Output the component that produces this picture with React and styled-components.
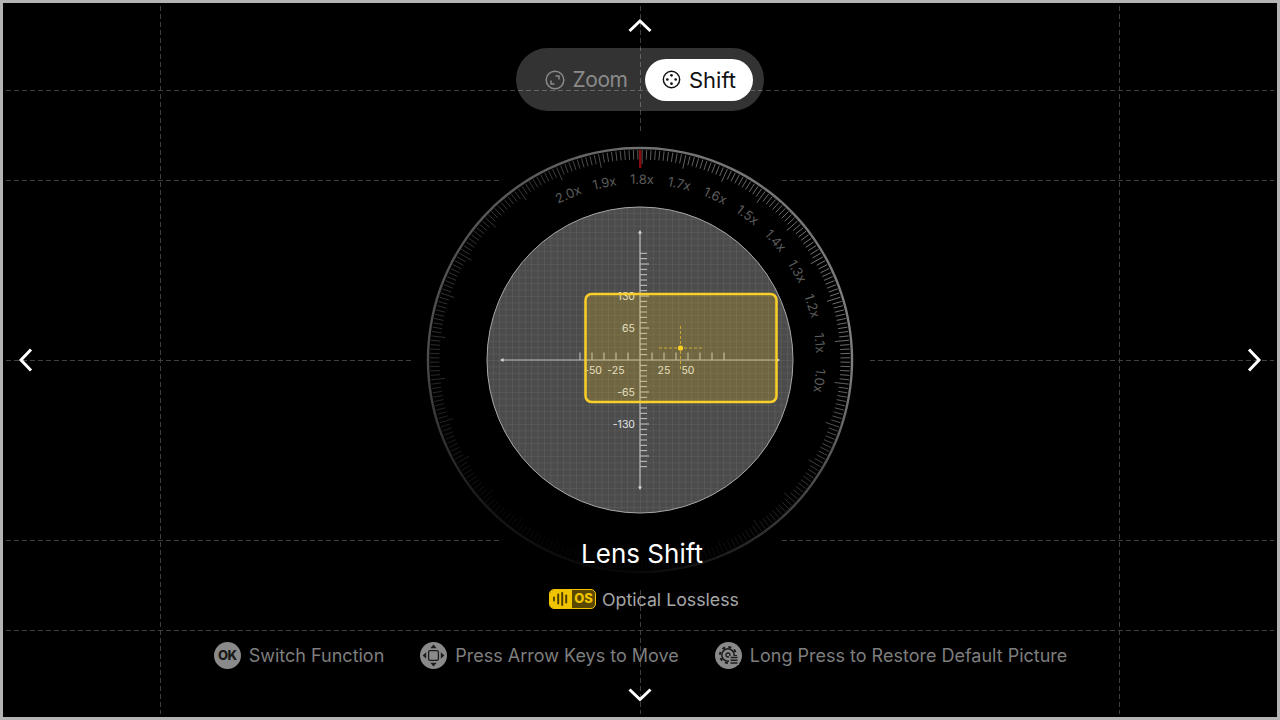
import React from "react";
import styled, { createGlobalStyle } from "styled-components";

const CX = 228;
const CY = 228;

const RING_STOPS = [[0, 0.45], [90, 0.5], [127, 0.28], [158, 0.1], [180, 0.03], [202, 0.05], [227, 0.1], [248, 0.2], [270, 0.3], [330, 0.36], [360, 0.45]];
const TICK_STOPS = [[0, 0.36], [60, 0.45], [90, 0.42], [127, 0.2], [158, 0.05], [180, 0.02], [202, 0.03], [227, 0.06], [248, 0.12], [270, 0.18], [330, 0.22], [360, 0.36]];
const ZOOM_LABELS = ["2.0x", "1.9x", "1.8x", "1.7x", "1.6x", "1.5x", "1.4x", "1.3x", "1.2x", "1.1x", "1.0x"];

function fade(stops, deg) {
  const d = ((deg % 360) + 360) % 360;
  for (let i = 1; i < stops.length; i++) {
    const [a, va] = stops[i - 1];
    const [b, vb] = stops[i];
    if (d <= b) return va + ((vb - va) * (d - a)) / (b - a);
  }
  return stops[0][1];
}

function polar(r, deg) {
  const rad = (deg * Math.PI) / 180;
  return [CX + r * Math.sin(rad), CY - r * Math.cos(rad)];
}

function Ring() {
  const parts = [];
  for (let d = 0; d < 360; d += 3) {
    const [x1, y1] = polar(212, d);
    const [x2, y2] = polar(212, d + 3);
    parts.push(
      <path key={d} d={`M${x1} ${y1}A212 212 0 0 1 ${x2} ${y2}`} fill="none" stroke="#fff" strokeOpacity={fade(RING_STOPS, d)} strokeWidth="2.4" />
    );
  }
  return parts;
}

function Ticks() {
  const ticks = [];
  for (let i = 0; i < 300; i++) {
    const d = 0.6 + i * 1.2;
    const major = i % 10 === 0;
    const [x1, y1] = polar(210, d);
    const [x2, y2] = polar(major ? 196 : 200.5, d);
    ticks.push(<line key={i} x1={x1} y1={y1} x2={x2} y2={y2} stroke="#fff" strokeOpacity={fade(TICK_STOPS, d)} strokeWidth="1" />);
  }
  return ticks;
}

function ZoomLabels() {
  return ZOOM_LABELS.map((label, i) => {
    const d = 0.6 + (i - 2) * 12;
    const [x, y] = polar(181, d);
    return (
      <text key={label} x={x} y={y} fontSize="13" fill="#5c5c5c" textAnchor="middle" dominantBaseline="central" transform={`rotate(${d} ${x} ${y})`}>
        {label}
      </text>
    );
  });
}

function Scale() {
  const h = [];
  for (let x = -60; x <= 84; x += 12) {
    if (x === 0) continue;
    h.push(<line key={x} x1={CX + x} y1={CY - 7.5} x2={CX + x} y2={CY} stroke="#c9c9c9" strokeWidth="1" />);
  }
  const v = [];
  for (let i = -20; i <= 20; i++) {
    if (i === 0) continue;
    const long = i % 6 === 0;
    const y = CY + i * 5.333;
    v.push(<line key={i} x1={CX} y1={y} x2={CX + (long ? 9 : 7)} y2={y} stroke="#c9c9c9" strokeWidth="1" />);
  }
  return (
    <g>
      {h}
      {v}
      <line x1={CX - 138} y1={CY} x2={CX + 138} y2={CY} stroke="#bdbdbd" strokeWidth="1.2" />
      <line x1={CX} y1={CY - 128} x2={CX} y2={CY + 128} stroke="#bdbdbd" strokeWidth="1.2" />
      <path d={`M${CX - 140} ${CY}l3.5 -2v4z`} fill="#d8d8d8" />
      <path d={`M${CX + 140} ${CY}l-3.5 -2v4z`} fill="#d8d8d8" />
      <path d={`M${CX} ${CY - 130}l-2 3.5h4z`} fill="#d8d8d8" />
      <path d={`M${CX} ${CY + 130}l-2 -3.5h4z`} fill="#d8d8d8" />
      <g fontSize="10.5" fill="#e4e4e4" textAnchor="middle">
        <text x={CX - 47} y={CY + 14}>-50</text>
        <text x={CX - 24} y={CY + 14}>-25</text>
        <text x={CX + 24} y={CY + 14}>25</text>
        <text x={CX + 48} y={CY + 14}>50</text>
      </g>
      <g fontSize="10.5" fill="#e4e4e4" textAnchor="end">
        <text x={CX - 5} y={CY - 60}>130</text>
        <text x={CX - 5} y={CY - 28}>65</text>
        <text x={CX - 5} y={CY + 36}>-65</text>
        <text x={CX - 5} y={CY + 68}>-130</text>
      </g>
    </g>
  );
}

function Dial() {
  return (
    <DialSvg viewBox="0 0 456 456">
      <defs>
        <pattern id="fine" width="6.4" height="6.4" patternUnits="userSpaceOnUse" x={CX} y={CY}>
          <path d="M6.4 0H0V6.4" fill="none" stroke="#626262" strokeWidth="1" />
        </pattern>
      </defs>
      <circle cx={CX} cy={CY} r="228" fill="#000" />
      <Ring />
      <Ticks />
      <rect x={CX - 1} y="18" width="2.4" height="18" fill="#8a0b0b" />
      <ZoomLabels />
      <circle cx={CX} cy={CY} r="153" fill="#4b4b4b" />
      <circle cx={CX} cy={CY} r="153" fill="url(#fine)" stroke="#a8a8a8" strokeWidth="1" />
      <Scale />
      <rect x="173.5" y="162" width="191" height="108" rx="6" fill="#ffcd18" fillOpacity="0.2" stroke="#fbcf2a" strokeWidth="2.5" />
      <g stroke="#e0b82c" strokeOpacity="0.8" strokeWidth="1" strokeDasharray="3 2">
        <line x1="247" y1="216" x2="291" y2="216" />
        <line x1="268.5" y1="194" x2="268.5" y2="238" />
      </g>
      <circle cx="268.5" cy="216" r="2.6" fill="#ffd21f" />
    </DialSvg>
  );
}

function Chevron({ dir }) {
  const paths = {
    up: "M1.5 13L12 3L22.5 13",
    down: "M1.5 2.5L12 12.5L22.5 2.5",
  };
  return (
    <ChevronSvg viewBox="0 0 24 15">
      <path d={paths[dir]} fill="none" stroke="#fff" strokeWidth="3" />
    </ChevronSvg>
  );
}

function SideChevron({ dir }) {
  return (
    <SideArrow $dir={dir} viewBox="0 0 15 24">
      <path d={dir === "left" ? "M13 1.5L3 12L13 22.5" : "M2 1.5L12 12L2 22.5"} fill="none" stroke="#fff" strokeWidth="3" />
    </SideArrow>
  );
}

function ZoomIcon() {
  return (
    <svg width="20" height="20" viewBox="0 0 20 20" fill="none" stroke="#8a8a8a" strokeWidth="1.5">
      <circle cx="10" cy="10" r="8.8" />
      <path d="M10.5 6H14V9.5M9.5 14H6V10.5" />
    </svg>
  );
}

function ShiftIcon() {
  return (
    <svg width="19" height="19" viewBox="0 0 20 20" fill="none">
      <circle cx="10" cy="10" r="8.6" stroke="#111" strokeWidth="1.5" />
      <g fill="#111">
        <circle cx="10" cy="5.6" r="1.4" />
        <circle cx="10" cy="14.4" r="1.4" />
        <circle cx="5.6" cy="10" r="1.4" />
        <circle cx="14.4" cy="10" r="1.4" />
      </g>
    </svg>
  );
}

function ArrowKeysIcon() {
  return (
    <svg width="27" height="27" viewBox="0 0 27 27">
      <circle cx="13.5" cy="13.5" r="13.5" fill="#8a8a8a" />
      <rect x="8.6" y="8.6" width="9.8" height="9.8" rx="1.6" fill="#8a8a8a" stroke="#1c1c1c" strokeWidth="1.3" />
      <g fill="#1c1c1c">
        <path d="M13.5 2.6l3.2 3.6h-6.4z" />
        <path d="M13.5 24.4l3.2 -3.6h-6.4z" />
        <path d="M2.6 13.5l3.6 -3.2v6.4z" />
        <path d="M24.4 13.5l-3.6 -3.2v6.4z" />
      </g>
    </svg>
  );
}

function RestoreIcon() {
  return (
    <svg width="27" height="27" viewBox="0 0 27 27" fill="none">
      <circle cx="13.5" cy="13.5" r="13.5" fill="#8a8a8a" />
      <circle cx="13" cy="13" r="6.2" stroke="#1c1c1c" strokeWidth="1.5" />
      <circle cx="13" cy="13" r="8" stroke="#1c1c1c" strokeWidth="2" strokeDasharray="3 3.3" />
      <circle cx="13" cy="13" r="2" stroke="#1c1c1c" strokeWidth="1.3" />
      <rect x="14" y="14" width="10" height="9" fill="#8a8a8a" />
      <path d="M15.5 15.5h7M15.5 18.3h7M15.5 21.1h7" stroke="#1c1c1c" strokeWidth="1.5" />
    </svg>
  );
}

function WaveIcon() {
  return (
    <svg width="18" height="14" viewBox="0 0 18 14" fill="none" stroke="#4f4000" strokeLinecap="round">
      <path d="M2 5.5v3" strokeWidth="1.8" />
      <path d="M6.2 2.5v9" strokeWidth="2" />
      <path d="M10.2 1v12" strokeWidth="2" />
      <path d="M14.2 3.5v7" strokeWidth="2" />
    </svg>
  );
}

export default function App() {
  return (
    <>
      <GlobalStyle />
      <Screen>
        <GridLines viewBox="0 0 1280 720">
          <g stroke="#404040" strokeWidth="1" strokeDasharray="5 3">
            <line x1="6" y1="90.5" x2="1274" y2="90.5" />
            <line x1="6" y1="180.5" x2="1274" y2="180.5" />
            <line x1="6" y1="360.5" x2="1274" y2="360.5" />
            <line x1="6" y1="540.5" x2="1274" y2="540.5" />
            <line x1="6" y1="630.5" x2="1274" y2="630.5" />
            <line x1="160.5" y1="6" x2="160.5" y2="714" />
            <line x1="640.5" y1="6" x2="640.5" y2="714" />
            <line x1="1119.5" y1="6" x2="1119.5" y2="714" />
          </g>
        </GridLines>
        <SideChevron dir="left" />
        <SideChevron dir="right" />
        <Content>
          <Chevron dir="up" />
          <Switcher>
            <Tab>
              <ZoomIcon />
              Zoom
            </Tab>
            <Tab $active>
              <ShiftIcon />
              Shift
            </Tab>
          </Switcher>
          <DialWrap>
            <Dial />
            <Title>Lens Shift</Title>
          </DialWrap>
          <ModeRow>
            <Badge>
              <BadgeWave>
                <WaveIcon />
              </BadgeWave>
              <BadgeText>OS</BadgeText>
            </Badge>
            Optical Lossless
          </ModeRow>
          <Hints>
            <Hint>
              <OkKey>OK</OkKey>
              Switch Function
            </Hint>
            <Hint>
              <ArrowKeysIcon />
              Press Arrow Keys to Move
            </Hint>
            <Hint>
              <RestoreIcon />
              Long Press to Restore Default Picture
            </Hint>
          </Hints>
          <BottomArrow>
            <Chevron dir="down" />
          </BottomArrow>
        </Content>
      </Screen>
    </>
  );
}

const GlobalStyle = createGlobalStyle`
  html, body {
    margin: 0;
    padding: 0;
    background: #000;
  }

  body {
    font-family: Inter, "Noto Sans", sans-serif;
  }
`;

const Screen = styled.div`
  position: relative;
  width: 1280px;
  height: 720px;
  box-sizing: border-box;
  border: 3px solid #b4b4b4;
  background: #000;
  overflow: hidden;
`;

const GridLines = styled.svg`
  position: absolute;
  left: -3px;
  top: -3px;
  width: 1280px;
  height: 720px;
`;

const Content = styled.div`
  position: relative;
  z-index: 1;
  display: flex;
  flex-direction: column;
  align-items: center;
  padding-top: 14.5px;
`;

const ChevronSvg = styled.svg`
  display: block;
  width: 24px;
  height: 15px;
`;

const SideArrow = styled.svg`
  position: absolute;
  z-index: 2;
  top: 345px;
  ${(p) => (p.$dir === "left" ? "left: 15px;" : "right: 15px;")}
  width: 15px;
  height: 24px;
`;

const Switcher = styled.div`
  display: flex;
  align-items: center;
  box-sizing: border-box;
  width: 248px;
  height: 63px;
  margin-top: 15.5px;
  padding: 0 11px;
  border-radius: 32px;
  background: rgba(255, 255, 255, 0.2);
`;

const Tab = styled.div`
  display: flex;
  align-items: center;
  justify-content: center;
  gap: 8px;
  height: 42px;
  border-radius: 21px;
  width: ${(p) => (p.$active ? "108px" : "118px")};
  font-size: ${(p) => (p.$active ? "22px" : "21px")};
  letter-spacing: ${(p) => (p.$active ? "0" : "-0.5px")};
  color: ${(p) => (p.$active ? "#111" : "#8a8a8a")};
  background: ${(p) => (p.$active ? "#fff" : "transparent")};
`;

const DialWrap = styled.div`
  position: relative;
  width: 456px;
  height: 456px;
  margin-top: 21px;
`;

const DialSvg = styled.svg`
  display: block;
  width: 456px;
  height: 456px;

  text {
    font-family: Inter, "Noto Sans", sans-serif;
  }
`;

const Title = styled.div`
  position: absolute;
  left: 4px;
  right: 0;
  top: 405px;
  text-align: center;
  font-size: 26px;
  line-height: 34px;
  color: #fff;
`;

const ModeRow = styled.div`
  display: flex;
  align-items: center;
  gap: 6px;
  margin: -1px 0 0 8px;
  height: 24px;
  font-size: 17.75px;
  color: #a6a6a6;
`;

const Badge = styled.div`
  display: flex;
  align-items: stretch;
  box-sizing: border-box;
  width: 47px;
  height: 20px;
  border: 1.5px solid #f0c400;
  border-radius: 5px;
  overflow: hidden;
  background: #5a4800;
`;

const BadgeWave = styled.div`
  display: flex;
  align-items: center;
  justify-content: center;
  width: 22px;
  background: #f0c400;
`;

const BadgeText = styled.span`
  flex: 1;
  text-align: center;
  font-size: 13px;
  font-weight: 800;
  line-height: 17px;
  color: #f0c400;
`;

const Hints = styled.div`
  display: flex;
  align-items: center;
  gap: 36px;
  margin: 31px 0 0 1px;
`;

const Hint = styled.div`
  display: flex;
  align-items: center;
  gap: 8px;
  font-size: 18px;
  line-height: 27px;
  color: #7e7e7e;
`;

const OkKey = styled.span`
  display: flex;
  align-items: center;
  justify-content: center;
  width: 27px;
  height: 27px;
  border-radius: 50%;
  background: #8a8a8a;
  font-size: 13px;
  font-weight: 800;
  letter-spacing: -0.5px;
  color: #1a1a1a;
`;

const BottomArrow = styled.div`
  margin-top: 18px;
`;
